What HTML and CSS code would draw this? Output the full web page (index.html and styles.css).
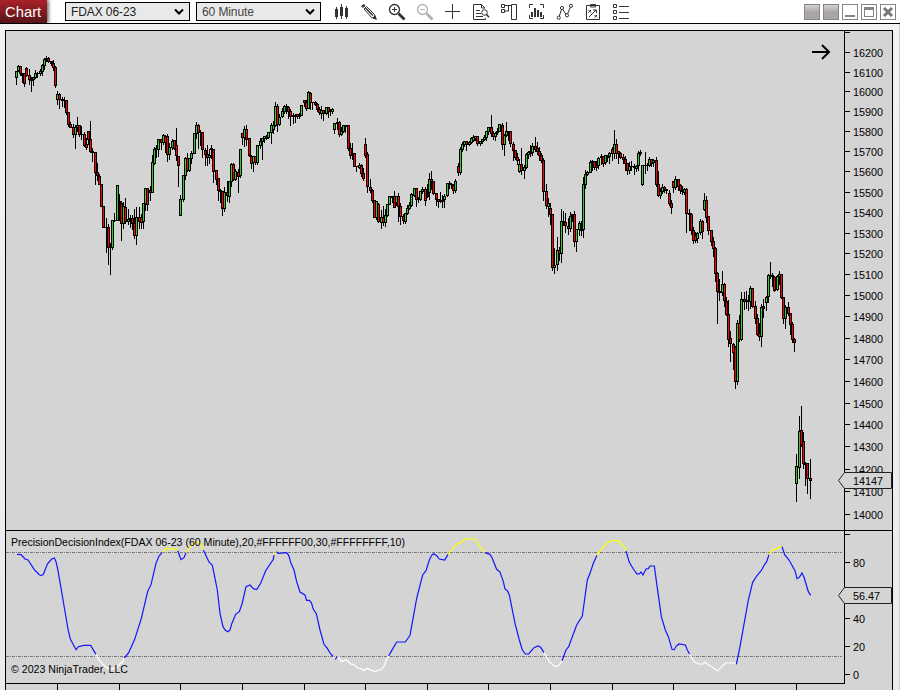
FILE: index.html
```html
<!DOCTYPE html>
<html lang="en">
<head>
    <meta charset="UTF-8">
    <meta name="viewport" content="width=device-width, initial-scale=1.0">
    <title>Chart</title>
    <link rel="stylesheet" href="styles.css">
</head>
<body>
    <div class="toolbar">
        <div class="logo">Chart</div>
        <div class="select">FDAX 06-23
            <svg width="10" height="8" viewBox="0 0 10 8"><path d="M1 1.5 L5 5.5 L9 1.5"/></svg>
        </div>
        <div class="select second">60 Minute
            <svg width="10" height="8" viewBox="0 0 10 8"><path d="M1 1.5 L5 5.5 L9 1.5"/></svg>
        </div>
        <div class="icons">
            <svg viewBox="0 0 18 18"><path class="solid" d="M3 6h3v8h-3z M8 4h3v9h-3z M13 5h3v9h-3z M4 4h1v12h-1z M9 1h1v15h-1z M14 3h1v13h-1z"/></svg>
            <svg viewBox="0 0 18 18"><path class="solid" d="M1 3l3-2 1.5 1.500-2.500 2.500z"/><path d="M4 6l2.500-2.500 8 8 1.500 4.500-4.500-1.500z"/><path class="mid" d="M5.500 5l7.500 7.500"/><path class="solid" d="M12.500 15l2.500-3 2 5z"/></svg>
            <svg viewBox="0 0 18 18"><circle class="lens" cx="6.500" cy="6.500" r="5"/><path d="M4 6.500h5 M6.500 4v5"/><path class="thick" d="M10.500 10.500l6 6"/></svg>
            <svg class="off" viewBox="0 0 18 18"><circle class="lens" cx="6.500" cy="6.500" r="5"/><path d="M4 6.500h5"/><path class="thick" d="M10.500 10.500l6 6"/></svg>
            <svg viewBox="0 0 18 18"><path d="M1 8.500h15 M8.500 1v15"/></svg>
            <svg viewBox="0 0 18 18"><path d="M13.500 15v1.500h-12v-15h8l3.500 3.500 M9.500 1.500v3.500h3.500 M4 7.500h4 M4 10.500h5 M4 13.500h7"/><circle cx="12.500" cy="9.500" r="2.800"/><path class="mid" d="M14.500 11.500l2.500 2.700"/></svg>
            <svg viewBox="0 0 18 18"><path d="M1.500 1.500h3v3h-3z M1.500 6.500h3v3h-3z M11.500 1.500h5v15h-5z M4.500 2.500h7 M4.500 8h4v-5"/></svg>
            <svg viewBox="0 0 18 18"><path d="M1.500 5v-3.500h3.500 M12 1.500h3.500v3.500 M1.500 12v3.500h3.500 M12 15.500h3.500v-3.500"/><path class="solid" d="M3 9h2v5h-2z M6 5h2v9h-2z M9 7h2v7h-2z M12 9h2v5h-2z"/></svg>
            <svg viewBox="0 0 18 18"><path d="M3 14l3-9 M6.500 6l4 6 M11.500 11l3-7"/><g class="node"><circle cx="2.700" cy="14.700" r="1.600"/><circle cx="6" cy="5" r="1.600"/><circle cx="11" cy="12.300" r="1.600"/><circle cx="15" cy="2.800" r="1.600"/></g></svg>
            <svg viewBox="0 0 18 18"><path d="M2.500 2.500h13v14h-13z M6.500 1.500h5v2.500h-5z M4.500 7l2.500 2.500 M7 7l-2.500 2.500 M10.500 12l2.500 2.500 M13 12l-2.500 2.500 M5 14l7-7 M9 7h3.500v3"/></svg>
            <svg viewBox="0 0 18 18"><path d="M1.500 1.500h3v3h-3z M1.500 7.500h3v3h-3z M1.500 13.500h3v3h-3z M7 3.500h10 M7 9.500h10 M7 15.500h10"/></svg>
        </div>
        <div class="window-buttons">
            <span class="filled"></span>
            <span class="filled"></span>
            <span><svg viewBox="0 0 14 14"><path d="M2 10h10v2h-10z"/></svg></span>
            <span><svg viewBox="0 0 14 14"><path fill-rule="evenodd" d="M2 2h10v10h-10z M3 5v6h8v-6z"/></svg></span>
            <span><svg viewBox="0 0 14 14"><path class="close" d="M3 3l8 8 M11 3l-8 8"/></svg></span>
        </div>
    </div>

    <div class="workspace">
        <div class="chart">
            <svg class="price" viewBox="6 31 838 499">
                <g id="candles" shape-rendering="crispEdges"></g>
                <path class="arrow" d="M812 52h17 M822 45l7 7l-7 7"/>
            </svg>
            <svg class="price-axis" id="price-axis" viewBox="844 31 48 499"></svg>
            <div class="indicator">
                <!-- indicator is drawn at three units per pixel -->
                <svg viewBox="18 33 2514 456">
                    <path class="limit" d="M18 97.500H2526 M18 409.500H2526"/>
                    <g class="line">
                        <polyline class="blue" points="51,103 63,104 75,117 84,120 103,149 118,164 124,167 130,163 142,132 155,117 163,114 168,125 174,152 205,333 211,357 228,389 235,380 252,376 272,376 288,403"/>
                        <polyline class="white" points="288,403 300,424 320,443 335,448 352,441 362,429 367,428 373,414"/>
                        <polyline class="blue" points="373,414 386,398 404,358 424,295 443,214 453,194 468,130 477,108 487,97"/>
                        <polyline class="yellow" points="487,97 498,85 530,88 533,92"/>
                        <polyline class="blue" points="533,92 537,102 543,119 552,113 558,98"/>
                        <polyline class="yellow" points="558,98 575,76 590,66 600,69 610,90"/>
                        <polyline class="blue" points="610,90 627,126 637,136 652,210 660,280 669,320 676,331 684,335 690,330 695,312 707,283 718,275 726,252 738,200 750,195 760,206 770,209 782,190 797,152 820,118 822,105"/>
                        <polyline class="yellow" points="822,105 829,95"/>
                        <polyline class="blue" points="829,95 835,100 860,98 866,106 873,130 882,150 890,185 900,216 915,225 920,241 928,241 934,248 940,268 949,281 960,330 972,373 982,385 992,402 1000,410"/>
                        <polyline class="white" points="1000,410 1007,418"/>
                        <polyline class="blue" points="1005,418 1013,409"/>
                        <polyline class="white" points="1013,409 1025,425 1038,419 1052,432 1060,433 1073,444 1083,446 1092,453 1099,445 1125,455 1145,447 1152,438 1159,420 1166,408"/>
                        <polyline class="blue" points="1166,408 1172,397 1190,366 1216,366 1230,346 1250,235 1268,165 1278,152 1288,120 1295,106 1301,101 1310,107 1318,117 1334,120 1344,103"/>
                        <polyline class="yellow" points="1344,103 1356,88 1370,73 1382,68 1395,57 1426,57 1436,75 1454,98"/>
                        <polyline class="blue" points="1454,98 1470,103 1476,113 1490,148 1500,156 1510,185 1515,207 1522,212 1528,225 1545,310 1558,360 1567,390 1576,402 1586,402 1602,383 1614,378 1622,382 1632,398"/>
                        <polyline class="white" points="1632,398 1648,425 1665,440 1678,436 1686,422"/>
                        <polyline class="blue" points="1686,422 1698,390 1706,380 1730,315 1747,288 1762,180 1770,160 1780,130 1791,106"/>
                        <polyline class="yellow" points="1791,106 1800,92 1825,66 1845,61 1858,64 1864,73 1873,82 1878,93"/>
                        <polyline class="blue" points="1878,93 1888,127 1900,147 1911,162 1919,161 1923,156 1929,165 1938,147 1945,146 1950,138 1963,138 1970,190 1984,290 1996,330 2005,350 2016,388 2023,389 2028,379 2037,372 2056,375 2062,390 2069,403"/>
                        <polyline class="white" points="2069,403 2083,426 2095,432 2110,432 2115,426 2125,434 2140,443 2153,453 2165,440 2178,429 2206,429 2209,433"/>
                        <polyline class="blue" points="2209,433 2219,385 2228,335 2245,240 2258,187 2270,168 2285,150 2294,133 2300,125 2307,104"/>
                        <polyline class="yellow" points="2307,104 2315,91 2333,85 2340,79 2346,80"/>
                        <polyline class="blue" points="2346,80 2354,104 2367,120 2385,152 2391,176 2398,172 2406,159 2412,172 2425,215 2432,226"/>
                    </g>
                    <g class="caption">
                        <text x="33" y="78" textLength="1182" lengthAdjust="spacingAndGlyphs">PrecisionDecisionIndex(FDAX 06-23 (60 Minute),20,#FFFFFF00,30,#FFFFFFFF,10)</text>
                        <text x="33" y="459" textLength="351" lengthAdjust="spacingAndGlyphs">© 2023 NinjaTrader, LLC</text>
                    </g>
                </svg>
            </div>
            <svg class="indicator-axis" id="indicator-axis" viewBox="844 531 48 159"></svg>
            <svg class="time-axis" id="time-axis" viewBox="6 684 838 6"></svg>
        </div>
    </div>
    <script src="chart.js"></script>
</body>
</html>
```
FILE: styles.css
```css
body {
    margin: 0;
    width: 900px;
    height: 690px;
    overflow: hidden;
    background-color: #eff0f1;
    font-family: "Liberation Sans", Arial, sans-serif;
    color: black;
}
svg {
    display: block;
}
.toolbar {
    display: flex;
    align-items: flex-start;
    box-sizing: border-box;
    height: 24px;
    background-color: white;
    border-bottom: 1px solid black;
}
.logo {
    box-sizing: border-box;
    width: 47px;
    height: 23px;
    padding-left: 5px;
    line-height: 24px;
    font-size: 14.8px;
    color: white;
    background: linear-gradient(#a82228, #581418);
    box-shadow: 2px 0 3px #777;
    clip-path: inset(0 -6px 0 0);
}
.select {
    display: flex;
    justify-content: space-between;
    align-items: center;
    box-sizing: border-box;
    width: 125px;
    height: 19px;
    margin: 2px 0 0 18px;
    padding: 0 5px;
    border: 1px solid black;
    background-color: #e8e9e8;
    font-size: 12px;
    letter-spacing: -0.1px;
    color: #222;
}
.select.second {
    margin-left: 6px;
    color: #444;
}
.select path {
    fill: none;
    stroke: black;
    stroke-width: 2;
}
.icons {
    display: flex;
    gap: 10px;
    margin: 3px 0 0 11px;
}
.icons svg {
    width: 18px;
    height: 18px;
    fill: none;
    stroke: #333;
    stroke-width: 1;
}
.icons .off {
    stroke: #b0b0b0;
}
.icons .solid {
    fill: #333;
    stroke: none;
}
.icons .lens {
    stroke-width: 1.3;
}
.icons .mid {
    stroke-width: 1.5;
}
.icons .thick {
    stroke-width: 2.8;
}
.icons .node {
    fill: white;
}
.window-buttons {
    display: flex;
    gap: 3px;
    margin: 4px 4px 0 auto;
}
.window-buttons span {
    box-sizing: border-box;
    width: 16px;
    height: 16px;
    border: 1px solid #858585;
    background-color: white;
}
.window-buttons .filled {
    background: linear-gradient(#d4d2d2, #aaa6a6 50%);
}
.window-buttons path {
    fill: #858585;
}
.window-buttons .close {
    fill: none;
    stroke: #777;
    stroke-width: 3;
}
.workspace {
    box-sizing: border-box;
    height: 666px;
    padding: 6px 4px 0 5px;
    border-right: 1px solid #cccccc;
    background: linear-gradient(#f2f2f1, #e9ebef);
}
.chart {
    display: grid;
    grid-template-columns: 838px 48px;
    grid-template-rows: 500px 153px 6px;
    box-sizing: border-box;
    width: 888px;
    height: 660px;
    border: 1px solid black;
    border-bottom: none;
    background-color: #d4d4d4;
}
.price, .price-axis {
    box-sizing: border-box;
    width: 100%;
    height: 500px;
    border-bottom: 1px solid black;
}
.indicator {
    height: 153px;
    border-bottom: 1px solid black;
    box-sizing: border-box;
}
.indicator svg {
    width: 838px;
    height: 152px;
}
.indicator-axis {
    grid-column: 2;
    grid-row: 2 / 4;
    width: 48px;
    height: 159px;
}
.time-axis {
    grid-column: 1;
    grid-row: 3;
    width: 838px;
    height: 6px;
}
.price-axis, .indicator-axis {
    overflow: visible;
}
.arrow {
    fill: none;
    stroke: black;
    stroke-width: 2;
}
.limit {
    stroke: #777;
    stroke-width: 3;
    stroke-dasharray: 9 3 3 3;
    shape-rendering: crispEdges;
}
.line {
    fill: none;
    stroke-width: 3.6;
}
.blue {
    stroke: #1414ff;
}
.yellow {
    stroke: #ffff00;
}
.white {
    stroke: white;
}
.caption {
    font-size: 33px;
}
.axis-label {
    font-size: 10.8px;
}
.marker {
    fill: #d4d4d4;
    stroke: #222;
    stroke-width: 1;
}
```
FILE: chart.js
```js
// x, high, body top, body bottom, low, colour (g = up, r = down, k = flat)
const candles = `
16 71 71 77 84 g|18 65 66 70 71 g|20 66 66 73 75 r|22 73 73 75 82 k|24 73 73 83 86 r|26 67 68 75 76 r|29 69 75 79 84 r|31 77 79 80 91 k
33 77 77 79 85 g|35 70 73 77 78 g|37 72 73 73 77 k|40 69 71 73 75 g|42 64 65 71 75 g|44 58 59 65 69 g|46 56 58 59 61 k|48 57 58 61 62 r
50 61 61 61 63 k|51 61 61 63 65 k|53 60 63 67 70 r|55 66 67 85 87 r|57 91 94 99 104 g|59 93 94 99 108 r|62 97 99 100 106 k|64 97 100 100 107 k
66 100 100 112 114 r|68 112 112 124 126 r|70 122 124 127 127 r|73 124 127 134 137 r|75 125 127 134 148 g|77 117 125 127 131 g|79 125 125 134 136 r
81 126 134 134 139 k|84 132 134 145 146 r|86 138 144 147 149 r|88 131 131 139 144 r|90 121 139 151 152 r|92 148 151 152 161 k|95 152 152 172 184 r
97 163 172 175 180 r|99 174 176 184 184 r|101 184 184 206 206 r|103 206 206 227 227 r|106 218 227 227 252 k|108 224 227 247 264 r|110 243 245 247 274 k
112 220 220 247 249 g|114 213 220 220 221 k|117 185 185 220 220 g|119 194 201 220 220 k|121 201 203 223 240 r|123 202 206 223 228 g|125 198 207 221 223 r
128 209 219 221 224 g|130 215 218 220 227 k|132 215 218 223 229 r|134 209 223 235 238 r|136 207 217 235 244 g|139 207 217 221 228 r|141 214 217 222 228 r
143 203 203 221 228 g|145 188 188 203 210 g|147 188 188 204 210 r|150 186 190 192 200 r|152 155 162 192 192 g|154 147 149 163 164 g|156 145 148 149 157 k
158 139 139 149 156 g|161 139 139 142 149 r|163 134 135 142 144 g|165 135 136 142 152 r|167 134 136 154 161 r|169 143 147 154 159 g|172 139 141 147 149 g
174 140 140 148 149 r|176 128 145 155 160 r|178 156 156 165 186 r|180 195 199 215 215 g|183 175 175 199 201 g|185 157 158 175 179 g|187 153 158 170 171 r
189 158 158 170 171 g|191 151 153 158 163 g|194 133 133 153 153 g|196 122 125 133 138 g|198 124 125 132 148 r|200 130 132 132 145 k|202 132 132 149 157 r
205 148 150 154 165 r|207 145 154 157 165 r|209 149 155 157 163 g|211 145 148 149 158 k|213 149 149 171 182 r|216 170 170 179 184 r|218 178 178 190 200 r
220 189 190 191 202 k|222 191 191 208 215 r|224 187 192 208 211 g|227 181 192 195 201 r|229 181 181 196 202 g|231 163 164 181 186 g|233 163 164 179 180 r
235 169 171 179 180 g|238 169 172 176 192 r|240 149 149 175 177 g|242 133 133 137 144 r|244 126 129 137 146 g|246 125 129 139 145 r|249 138 138 155 156 r
251 155 156 163 168 r|253 156 156 162 171 g|255 156 156 162 164 r|257 145 145 162 164 g|260 138 141 145 148 g|262 138 138 141 159 g|264 136 136 138 142 g
266 135 136 138 139 k|268 132 132 137 138 g|271 123 125 132 143 g|273 121 125 129 133 g|275 102 106 125 126 g|277 104 106 124 131 r|279 114 117 124 125 g
282 108 111 116 117 g|284 105 106 111 113 g|286 104 106 107 113 k|288 106 107 111 118 r|290 109 111 116 125 r|293 113 115 116 123 k|295 114 116 116 122 k
297 114 114 116 118 r|299 113 115 116 118 k|301 105 105 115 115 g|304 100 100 102 106 r|306 100 102 108 110 r|308 91 92 108 108 g|310 92 93 102 109 r
312 102 102 102 109 k|315 101 102 104 105 r|317 103 104 109 111 r|319 107 109 112 114 r|321 106 110 113 118 g|323 110 110 113 120 r|326 107 107 113 114 g
328 107 107 111 117 r|330 109 110 111 115 g|332 108 109 111 113 g|334 123 123 129 133 g|337 118 122 123 129 k|339 121 122 134 136 r|341 127 131 134 135 g
343 125 125 131 132 g|345 125 125 126 132 k|348 125 125 148 150 r|350 143 148 155 158 r|352 143 153 154 159 g|354 153 153 166 166 r|356 166 166 166 171 k
359 163 165 167 168 g|361 164 165 173 176 r|363 168 173 178 180 r|365 138 144 155 157 r|367 152 154 186 192 r|370 179 187 190 192 r|372 189 190 200 202 r
374 200 200 217 217 r|376 201 201 217 219 g|378 203 204 221 222 r|381 210 217 222 228 g|383 206 217 222 225 r|385 209 215 222 226 g|387 204 204 215 216 g
389 196 196 204 204 g|392 196 196 197 202 k|394 191 196 207 207 r|396 196 196 202 205 g|398 193 196 206 221 r|400 203 206 216 224 r|403 214 216 220 223 r
405 213 213 221 223 g|407 205 208 213 214 g|409 202 205 208 209 g|411 193 194 205 206 g|414 188 188 195 196 g|416 188 188 199 206 r|418 197 199 199 202 k
420 191 191 199 200 g|422 187 189 191 193 g|425 187 189 200 205 r|427 184 189 196 197 k|429 173 179 192 199 g|431 171 179 181 189 r|433 181 181 193 194 r
436 193 193 199 205 r|438 199 199 201 207 r|440 192 201 201 202 k|442 195 200 201 207 k|444 194 196 199 207 g|447 183 183 195 196 g|449 181 183 184 188 k
451 183 184 184 188 k|453 184 185 190 193 r|455 179 181 190 192 g|458 163 166 172 175 r|460 147 149 172 174 g|462 142 144 149 151 g|464 141 141 144 146 g
466 141 141 144 150 r|469 141 142 144 145 g|471 137 138 142 143 g|473 135 137 140 141 g|475 136 136 138 140 g|477 136 136 143 145 r|480 141 141 143 145 g
482 139 139 141 143 g|484 135 137 139 140 g|486 131 131 137 140 g|488 127 127 131 134 g|491 115 127 133 136 r|493 131 133 136 139 r|495 132 133 136 140 g
497 128 131 132 134 k|499 124 124 131 131 g|502 123 125 144 149 r|504 134 135 144 155 g|506 122 131 135 136 g|508 131 131 131 140 k|510 131 131 143 146 r
513 142 144 150 160 r|515 150 150 157 159 r|517 153 157 160 164 r|519 159 164 171 172 g|521 148 164 170 174 r|524 165 167 170 178 g|526 153 154 167 168 g
528 151 152 154 158 g|530 145 151 153 156 k|532 143 146 152 155 g|535 137 146 149 151 r|537 142 148 151 154 r|539 147 151 155 160 r|541 153 155 160 162 r
543 158 160 191 200 r|546 184 191 205 208 r|548 198 203 206 216 g|550 203 208 214 224 r|552 214 214 267 270 r|554 248 265 267 273 g|557 237 250 264 270 g
559 247 250 253 260 r|561 209 221 253 262 g|563 211 221 222 225 k|565 213 222 225 232 r|568 218 226 228 234 r|570 212 216 228 231 g|572 214 214 215 221 g
574 211 214 241 246 r|576 229 229 241 251 g|579 221 223 229 235 g|581 221 229 230 235 k|583 177 184 229 237 g|585 170 174 184 188 g|587 171 172 174 175 g
590 160 162 172 172 g|592 160 161 162 170 k|594 161 161 167 169 r|596 161 165 167 170 r|598 157 158 165 168 g|601 154 156 157 164 k|603 156 156 163 166 r
605 155 155 162 164 g|607 155 156 157 161 k|609 152 153 156 163 g|612 147 149 153 160 r|614 130 144 153 158 g|616 139 144 153 158 r|618 151 151 153 163 r
620 152 153 157 158 r|623 154 157 159 163 r|625 156 159 163 170 r|627 163 163 170 174 r|629 162 166 170 173 g|631 161 166 166 170 k|634 164 166 167 174 k
636 165 166 168 171 g|638 151 153 165 170 g|640 150 152 153 155 k|642 165 165 184 185 g|645 152 165 165 173 k|647 163 165 165 170 k|649 157 159 165 166 g
651 159 159 163 166 r|653 159 160 162 166 g|656 157 160 184 186 r|658 171 184 195 196 r|660 188 191 195 198 g|662 184 187 191 193 g|664 186 187 189 192 r
666 189 189 190 193 k|669 190 193 203 205 r|671 200 203 207 213 r|673 181 181 187 192 r|675 176 179 187 189 g|678 179 179 186 190 r|680 184 185 190 193 r
682 186 190 191 194 k|684 188 189 192 194 g|686 188 189 213 232 r|689 209 213 214 230 k|691 213 214 230 234 r|693 227 230 240 243 r|695 232 235 240 242 r
697 232 233 238 242 g|700 219 221 232 234 g|702 220 221 231 238 r|704 193 200 209 210 g|706 196 200 217 222 r|708 216 216 230 234 r|711 230 230 241 245 r
713 237 241 248 256 r|715 247 248 273 281 r|717 272 273 291 323 r|719 279 291 292 300 k|722 271 284 292 295 g|724 283 284 300 306 r|726 297 301 314 315 r
728 300 314 339 346 r|730 331 338 343 361 r|733 343 344 352 369 r|735 346 347 381 388 r|737 320 323 381 384 g|739 315 323 339 341 r|741 292 299 339 340 g
744 292 299 301 309 r|746 291 300 300 308 k|748 295 300 301 310 k|750 286 288 301 308 g|752 288 288 306 307 r|755 301 306 318 323 r|757 314 318 334 335 r
759 323 333 336 340 r|761 304 307 336 346 g|763 299 306 308 317 r|766 296 297 302 310 g|768 274 275 296 302 g|770 262 275 276 278 k|772 273 275 276 286 k
774 276 277 290 291 r|777 275 276 289 290 g|779 271 274 276 284 g|781 274 274 297 298 r|783 297 297 318 323 r|785 305 307 318 328 g|788 302 307 313 315 r
790 313 313 324 334 r|792 322 324 339 342 r|794 338 339 342 351 r|796 454 466 483 501 g|799 416 431 467 478 g|801 406 430 444 446 r|803 432 441 463 468 r
805 462 463 464 485 k|807 463 463 478 493 r|810 459 478 480 498 r`;

const colours = { g: '#32cd32', r: '#ff0000', k: '#000000' };

function rect(x, y, width, height, fill) {
    return `<rect x="${x}" y="${y}" width="${width}" height="${height}" fill="${fill}"/>`;
}

function drawCandles() {
    let out = '';
    candles.trim().split(/[|\n]/).forEach(row => {
        const parts = row.split(' ');
        const [x, high, top, bottom, low] = parts.map(Number);
        out += rect(x, high, 1, low - high + 1, '#000');
        out += rect(x - 1, top, 3, bottom - top + 1, '#000');
        if (bottom - top > 1) {
            out += rect(x, top + 1, 1, bottom - top - 1, colours[parts[5]]);
        }
    });
    document.getElementById('candles').innerHTML = out;
}

function tick(y, label) {
    const text = label === undefined ? '' : `<text class="axis-label" x="853" y="${y + 5}">${label}</text>`;
    return rect(844, y, 6, 1, '#000') + text;
}

function marker(y, label) {
    return `<path class="marker" d="M838.5 ${y + .5}l6 -8h47v16h-47z"/>` +
        `<text class="axis-label" x="853" y="${y + 5}">${label}</text>`;
}

function drawAxes() {
    const prices = [52, 72, 91, 111, 131, 151, 171, 192, 212, 233, 253, 274, 295, 316, 338, 359, 381, 403, 424, 446, 469, 491, 514];
    let out = rect(844, 31, 1, 499, '#000') + tick(32);
    prices.forEach((y, i) => out += tick(y, 16200 - i * 100));
    document.getElementById('price-axis').innerHTML = out + marker(480, '14147');

    out = rect(844, 531, 1, 153, '#000') + tick(534) + tick(562, 80) + tick(618, 40) + tick(646, 20) + tick(674, 0);
    document.getElementById('indicator-axis').innerHTML = out + marker(595, '56.47');

    const times = [57, 119, 180, 242, 304, 365, 427, 488, 550, 612, 673, 735, 796];
    document.getElementById('time-axis').innerHTML = times.map(x => rect(x, 684, 1, 6, '#000')).join('');
}

drawCandles();
drawAxes();
```
